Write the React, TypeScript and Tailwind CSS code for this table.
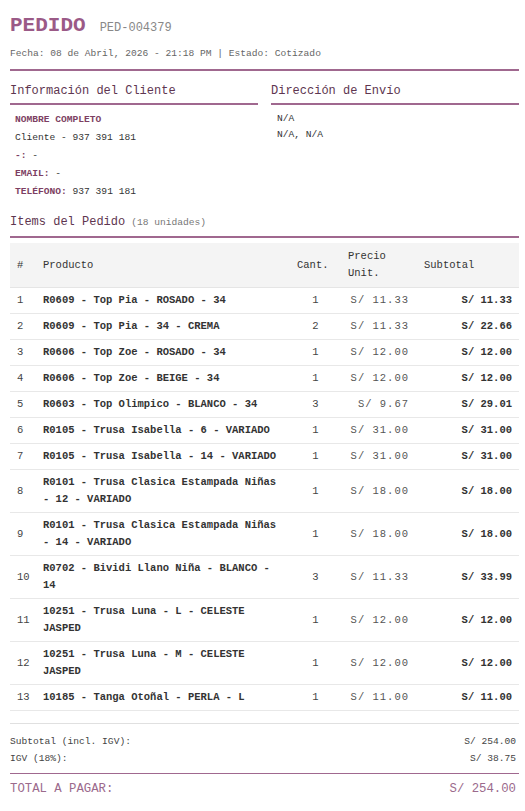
import React from 'react';

const items: [string, number, string, string][] = [
  ['R0609 - Top Pia - ROSADO - 34', 1, '11.33', '11.33'],
  ['R0609 - Top Pia - 34 - CREMA', 2, '11.33', '22.66'],
  ['R0606 - Top Zoe - ROSADO - 34', 1, '12.00', '12.00'],
  ['R0606 - Top Zoe - BEIGE - 34', 1, '12.00', '12.00'],
  ['R0603 - Top Olimpico - BLANCO - 34', 3, '9.67', '29.01'],
  ['R0105 - Trusa Isabella - 6 - VARIADO', 1, '31.00', '31.00'],
  ['R0105 - Trusa Isabella - 14 - VARIADO', 1, '31.00', '31.00'],
  ['R0101 - Trusa Clasica Estampada Niñas - 12 - VARIADO', 1, '18.00', '18.00'],
  ['R0101 - Trusa Clasica Estampada Niñas - 14 - VARIADO', 1, '18.00', '18.00'],
  ['R0702 - Bividi Llano Niña - BLANCO - 14', 3, '11.33', '33.99'],
  ['10251 - Trusa Luna - L - CELESTE JASPED', 1, '12.00', '12.00'],
  ['10251 - Trusa Luna - M - CELESTE JASPED', 1, '12.00', '12.00'],
  ['10185 - Tanga Otoñal - PERLA - L', 1, '11.00', '11.00'],
];

export default function App() {
  return (
    <div className="bg-white min-h-screen pl-[10px] pr-[6px] pt-[12px] font-['Courier_New',Courier,'Liberation_Mono',monospace] text-[#333]">
      {/* Header */}
      <div className="flex items-baseline">
        <h1 className="text-[21px] font-bold text-[#9b5a87] leading-[28px]">PEDIDO</h1>
        <span className="ml-[14px] text-[12px] text-[#888]">PED-004379</span>
      </div>
      <p className="mt-[7px] text-[9.6px] text-[#666] leading-[14px]">
        Fecha: 08 de Abril, 2026 - 21:18 PM | Estado: Cotizado
      </p>
      <div className="mt-[8px] h-[2px] bg-[#a0688f]" />

      {/* Client + shipping */}
      <div className="grid grid-cols-2 gap-[13px] mt-[11px]">
        <div>
          <h2 className="text-[12px] text-[#5e3550] leading-[18px]">Información del Cliente</h2>
          <div className="mt-[3px] h-[2px] bg-[#a0688f]" />
          <div className="pl-[5px] pt-[6px] text-[9.6px] leading-[18px]">
            <p className="font-bold text-[#7d3f63]">NOMBRE COMPLETO</p>
            <p>Cliente - 937 391 181</p>
            <p><span className="font-bold text-[#7d3f63]">-:</span> -</p>
            <p><span className="font-bold text-[#7d3f63]">EMAIL:</span> -</p>
            <p><span className="font-bold text-[#7d3f63]">TELÉFONO:</span> 937 391 181</p>
          </div>
        </div>
        <div>
          <h2 className="text-[12px] text-[#5e3550] leading-[18px]">Dirección de Envío</h2>
          <div className="mt-[3px] h-[2px] bg-[#a0688f]" />
          <div className="pl-[6px] pt-[6px] text-[9.6px] leading-[16px]">
            <p>N/A</p>
            <p>N/A, N/A</p>
          </div>
        </div>
      </div>

      {/* Items */}
      <div className="mt-[12px] flex items-baseline">
        <h2 className="text-[12px] text-[#5e3550] leading-[18px]">Items del Pedido</h2>
        <span className="ml-[6px] text-[9.6px] text-[#777]">(18 unidades)</span>
      </div>
      <div className="mt-[5px] h-[2px] bg-[#a0688f]" />

      <table className="mt-[5px] w-full table-fixed border-collapse text-[10.5px] leading-[17px]">
        <colgroup>
          <col className="w-[26px]" />
          <col className="w-[254px]" />
          <col className="w-[51px]" />
          <col className="w-[76px]" />
          <col />
        </colgroup>
        <thead>
          <tr className="bg-[#f4f4f4] border-b border-[#e5e5e5] text-left text-[#333]">
            <th className="font-normal py-[5px] pl-[7px]">#</th>
            <th className="font-normal py-[5px] pl-[7px]">Producto</th>
            <th className="font-normal py-[5px] pl-[7px]">Cant.</th>
            <th className="font-normal py-[5px] pl-[7px] pr-[8px]">Precio Unit.</th>
            <th className="font-normal py-[5px] pl-[7px]">Subtotal</th>
          </tr>
        </thead>
        <tbody>
          {items.map(([name, qty, price, sub], i) => (
            <tr key={i} className="border-b border-[#e8e8e8]">
              <td className="py-[4px] pl-[7px] text-[#444]">{i + 1}</td>
              <td className="py-[4px] pl-[7px] pr-[7px] font-bold text-[#333]">{name}</td>
              <td className="py-[4px] text-center text-[#444]">{qty}</td>
              <td className="py-[4px] pr-[8px] text-right text-[#555] tracking-[1px]">S/ {price}</td>
              <td className="py-[4px] pr-[7px] text-right font-bold text-[#333]">S/ {sub}</td>
            </tr>
          ))}
        </tbody>
      </table>

      {/* Totals */}
      <div className="mt-[12px] border-t border-[#e0e0e0] pt-[9px] text-[9.6px] text-[#444] leading-[17px]">
        <div className="flex justify-between pr-[3px]">
          <span>Subtotal (incl. IGV):</span>
          <span>S/ 254.00</span>
        </div>
        <div className="flex justify-between pr-[3px]">
          <span>IGV (18%):</span>
          <span>S/ 38.75</span>
        </div>
      </div>
      <div className="mt-[6px] border-t border-[#a0688f] pt-[5px] flex justify-between pr-[3px] text-[12.3px] text-[#9b6a8c] leading-[20px]">
        <span>TOTAL A PAGAR:</span>
        <span>S/ 254.00</span>
      </div>
    </div>
  );
}
